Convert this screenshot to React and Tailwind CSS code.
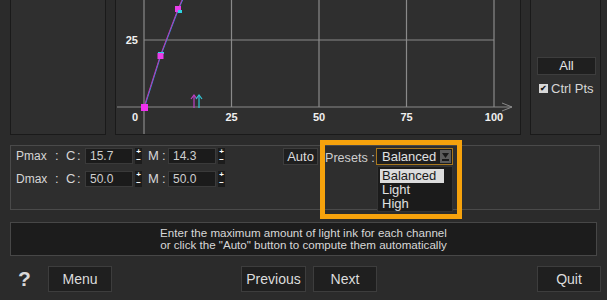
import React from "react";

function Btn({ children, className = "" }) {
  return (
    <div
      className={`flex items-center justify-center border border-[#3d3d3d] bg-[#1f1f1f] text-[#dcdcdc] ${className}`}
    >
      {children}
    </div>
  );
}

function Spinner() {
  return (
    <div className="ml-[2px] flex h-[16px] w-[7px] flex-col overflow-hidden bg-[#1c1c1c] text-[8px] font-bold leading-[8px] text-white">
      <span className="h-[8px] text-center">+</span>
      <span className="h-[8px] text-center">−</span>
    </div>
  );
}

function Field({ value }) {
  return (
    <div className="flex h-[16px] w-[48px] items-center border border-[#3a3a3a] bg-[#1b1b1b] pl-[4px] text-[12px] text-[#cfcfcf]">
      {value}
    </div>
  );
}

function ValueRow({ label, c, m }) {
  return (
    <div className="flex h-[16px] items-center whitespace-nowrap text-[#d6d6d6]">
      <span className="w-[39px] text-[12px]">{label}</span>
      <span className="w-[11px] text-[13px]">:</span>
      <span className="w-[11px] text-[13px]">C</span>
      <span className="w-[8px] text-[13px]">:</span>
      <Field value={c} />
      <Spinner />
      <span className="ml-[6px] w-[14px] text-[13px]">M</span>
      <span className="w-[6px] text-[13px]">:</span>
      <Field value={m} />
      <Spinner />
    </div>
  );
}

function Chart() {
  const grid = "#8a8a8a";
  const xs = [
    [115.5, "25"],
    [203, "50"],
    [290.5, "75"],
    [378, "100"],
  ];
  return (
    <svg width="404" height="134" className="block">
      <line x1="28" y1="0" x2="28" y2="134" stroke={grid} strokeWidth="1.2" />
      <line x1="1" y1="107" x2="396" y2="107" stroke={grid} strokeWidth="1.2" />
      <polyline points="386,103 396,107 386,111" fill="none" stroke={grid} strokeWidth="1" />
      <line x1="28" y1="40" x2="378" y2="40" stroke={grid} strokeWidth="1.2" />
      {xs.map(([x, t]) => (
        <g key={t}>
          <line x1={x} y1="0" x2={x} y2="107" stroke={grid} strokeWidth="1.2" />
          <text x={x} y="121" textAnchor="middle" fill="#f0f0f0" fontSize="11" fontWeight="bold" fontFamily="Liberation Sans, Arial, sans-serif">
            {t}
          </text>
        </g>
      ))}
      <text x="19" y="121" textAnchor="middle" fill="#f0f0f0" fontSize="11" fontWeight="bold" fontFamily="Liberation Sans, Arial, sans-serif">0</text>
      <text x="22" y="44" textAnchor="end" fill="#f0f0f0" fontSize="11" fontWeight="bold" fontFamily="Liberation Sans, Arial, sans-serif">25</text>

      <polyline points="28.6,107 45,55 62.6,9 66.6,0" fill="none" stroke="#3a8ee6" strokeWidth="1" />
      <polyline points="28,107 44.5,55 62,9 66,0" fill="none" stroke="#b83ab8" strokeWidth="1" />

      <rect x="42" y="52" width="6" height="2" fill="#2fd3e0" />
      <rect x="41.5" y="53" width="6" height="6" fill="#e83ee8" />
      <rect x="59" y="6" width="6" height="6" fill="#e83ee8" />
      <rect x="62" y="10" width="4" height="3" fill="#2fd3e0" />
      <rect x="25" y="104" width="7" height="7" fill="#f030f0" />

      <g stroke="#c040c8" strokeWidth="1.2" fill="none">
        <line x1="78" y1="96" x2="78" y2="108" />
        <polyline points="75,99 78,95 81,99" />
      </g>
      <g stroke="#30c8d8" strokeWidth="1.2" fill="none">
        <line x1="83" y1="96" x2="83" y2="108" />
        <polyline points="80,99 83,95 86,99" />
      </g>
    </svg>
  );
}

export default function App() {
  return (
    <div className="relative h-[300px] w-[607px] overflow-hidden bg-[#2b2b2b] font-['Liberation_Sans',Arial,sans-serif]">
      {/* top panels */}
      <div className="flex h-[135px] pl-[10px]">
        <div className="h-[135px] w-[96px] border-x border-b border-[#1a1a1a] bg-[#2f2f2f]" />
        <div className="ml-[9px] h-[135px] w-[406px] border-x border-b border-[#1a1a1a] bg-[#2f2f2f]">
          <Chart />
        </div>
        <div className="ml-[9px] flex h-[135px] w-[71px] flex-col border-x border-b border-[#1a1a1a] bg-[#2f2f2f]">
          <Btn className="ml-[6px] mt-[57px] h-[18px] w-[59px] text-[13px] text-[#e6e6e6]">All</Btn>
          <div className="ml-[8px] mt-[4px] flex items-center text-[13px] text-[#d6d6d6]">
            <div className="flex h-[9px] w-[9px] items-center justify-center bg-[#d8d8d8] text-[8px] font-bold leading-none text-[#1a1a1a]">
              ✔
            </div>
            <span className="ml-[3px]">Ctrl Pts</span>
          </div>
        </div>
      </div>

      {/* values panel */}
      <div className="ml-[10px] mt-[10px] flex h-[65px] w-[590px] items-start border border-[#4a4a4a] bg-[#2e2e2e] pl-[5px] pt-[2px]">
        <div className="flex flex-col gap-[7px]">
          <ValueRow label="Pmax" c="15.7" m="14.3" />
          <ValueRow label="Dmax" c="50.0" m="50.0" />
        </div>
        <Btn className="ml-[58px] h-[17px] w-[35px] text-[13px]">Auto</Btn>
        <span className="ml-[7px] mt-[1px] w-[51px] whitespace-nowrap text-[12.6px] text-[#cfcfcf]">Presets :</span>
        <div className="flex h-[17px] w-[77px] items-center border border-[#a8781e] bg-[#1e1e1e]">
          <span className="flex-1 pl-[5px] text-[13px] text-[#e0e0e0]">Balanced</span>
          <div className="mr-[1px] flex h-[13px] w-[11px] flex-col items-center justify-center bg-[#5c5c5c]">
            <svg width="7" height="5" viewBox="0 0 7 5">
              <polygon points="0,0 7,0 3.5,5" fill="#1a1a1a" />
            </svg>
            <div className="mt-[1px] h-[2px] w-[7px] bg-[#1a1a1a]" />
          </div>
        </div>
      </div>

      {/* message */}
      <div className="ml-[10px] mt-[12px] flex h-[34px] w-[587px] flex-col items-center justify-center border border-[#474747] bg-[#1c1c1c] text-[11.6px] leading-[12px] text-[#d8d8d8]">
        <span>Enter the maximum amount of light ink for each channel</span>
        <span>or click the "Auto" button to compute them automatically</span>
      </div>

      {/* bottom buttons */}
      <div className="mt-[10px] flex h-[26px] items-center">
        <span className="ml-[18px] w-[12px] text-[21px] font-bold leading-[26px] text-[#d8d8d8]">?</span>
        <Btn className="ml-[18px] h-[26px] w-[64px] text-[14px]">Menu</Btn>
        <Btn className="ml-[129px] h-[26px] w-[65px] text-[14px]">Previous</Btn>
        <Btn className="ml-[7px] h-[26px] w-[64px] text-[14px]">Next</Btn>
        <Btn className="ml-[160px] h-[26px] w-[64px] text-[14px]">Quit</Btn>
      </div>

      {/* open preset list */}
      <div className="absolute left-[377px] top-[166px] flex h-[46px] w-[76px] flex-col border border-[#333] bg-[#1b1b1b] pt-[2px] text-[13px] leading-[14px] text-[#e0e0e0]">
        <span className="ml-[2px] w-[64px] bg-[#dcdcdc] pl-[2px] text-[#1a1a1a]">Balanced</span>
        <span className="pl-[4px]">Light</span>
        <span className="pl-[4px]">High</span>
      </div>

      {/* highlight frame */}
      <div className="pointer-events-none absolute left-[320px] top-[140px] h-[79px] w-[142px] border-[5px] border-[#f6a20c]" />
    </div>
  );
}
